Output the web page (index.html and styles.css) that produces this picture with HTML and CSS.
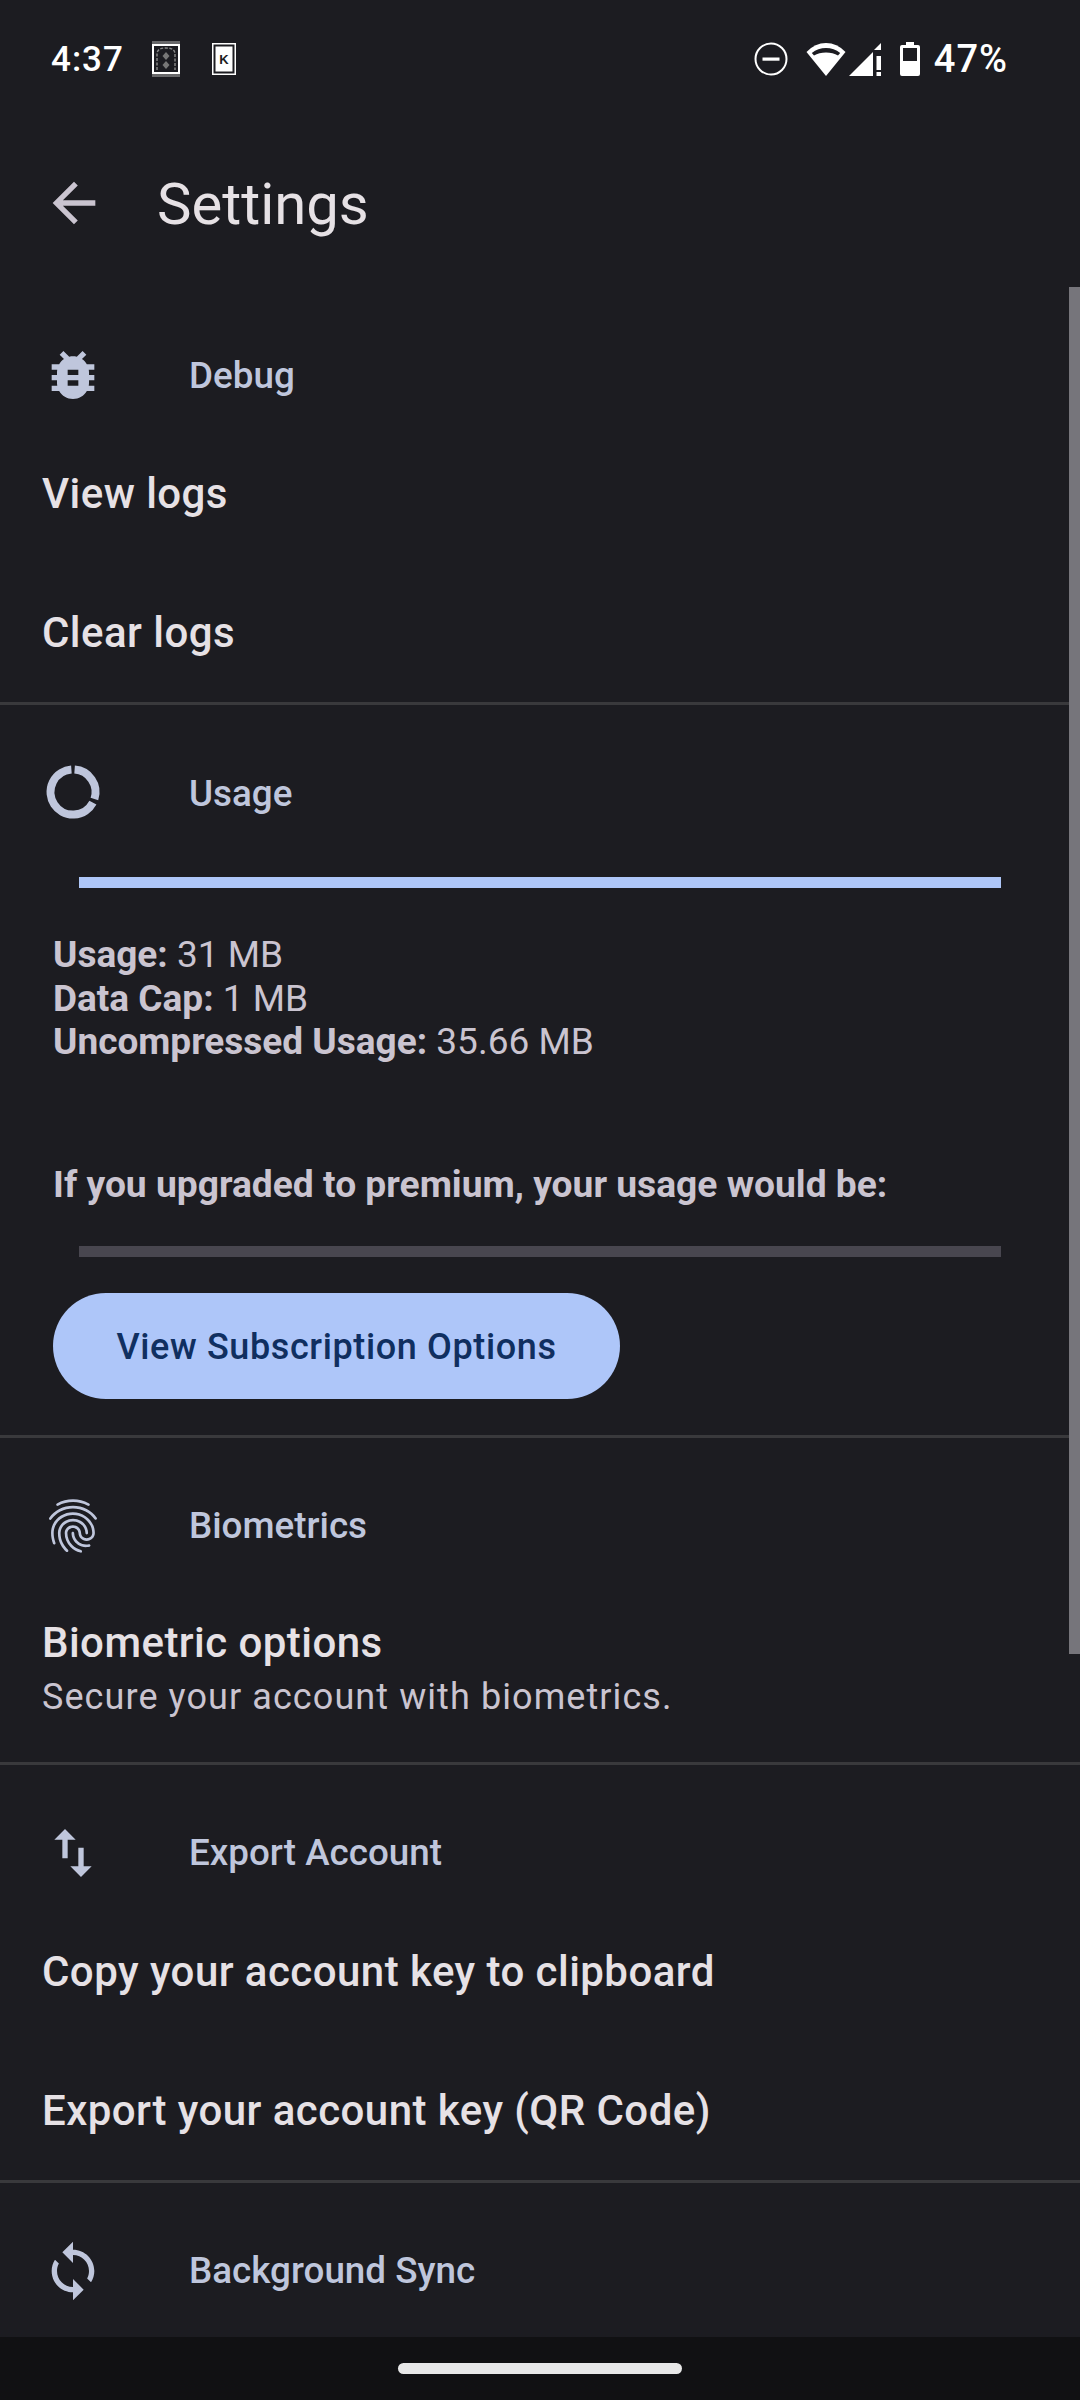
FILE: index.html
```html
<!DOCTYPE html>
<html lang="en">
<head>
    <meta charset="UTF-8">
    <title>Settings</title>
    <link rel="stylesheet" href="styles.css">
</head>
<body>
    <div class="status-bar">
        <span class="clock">4:37</span>
        <svg class="notif notif-rug" viewBox="0 0 28 36">
            <path d="M1 0v5M3 0v5M5 0v5M7 0v5M9 0v5M11 0v5M13 0v5M15 0v5M17 0v5M19 0v5M21 0v5M23 0v5M25 0v5M27 0v5M1 31v5M3 31v5M5 31v5M7 31v5M9 31v5M11 31v5M13 31v5M15 31v5M17 31v5M19 31v5M21 31v5M23 31v5M25 31v5M27 31v5" stroke="#b5b5b5" stroke-width="1" fill="none"/>
            <rect x="1" y="4" width="26" height="28" fill="none" stroke="#fff" stroke-width="2"/>
            <path d="M5 29V13q0-6 9-6t9 6v16" fill="none" stroke="#8a8a8a" stroke-width="1.4" stroke-dasharray="3 1.5"/>
            <path d="M14 11l3.500 4-3.500 4-3.500-4zM14 20l3.500 4-3.500 4-3.500-4z" fill="#777"/>
        </svg>
        <svg class="notif notif-card" viewBox="0 0 24 32">
            <rect x="0.750" y="0.750" width="22.500" height="30.500" fill="none" stroke="#fff" stroke-width="1.500"/>
            <rect x="3.500" y="3.500" width="17" height="25" fill="#fff"/>
            <text x="12" y="21" class="card-letter">K</text>
        </svg>
        <div class="status-right">
            <svg class="sys sys-dnd" viewBox="0 0 34 34">
                <circle cx="17" cy="17" r="15.500" fill="none" stroke="#fff" stroke-width="2"/>
                <rect x="8.500" y="15.500" width="17" height="3.200" fill="#fff"/>
            </svg>
            <svg class="sys sys-wifi" viewBox="0 0 40 34">
                <path d="M20 34L0.500 10Q9 1 20 1T39.500 10Z" fill="#fff"/>
                <path d="M20 10.500Q13 10.500 8 13.500L5.800 11Q12 6 20 6T34.200 11L32 13.500Q27 10.500 20 10.500Z" fill="#1c1c21"/>
            </svg>
            <svg class="sys sys-signal" viewBox="0 0 33 33">
                <path d="M0 33L24 9V33Z" fill="#fff"/>
                <path d="M25 7L32 0V7Z" fill="#fff"/>
                <rect x="27.500" y="13" width="4.500" height="14" fill="#fff"/>
                <rect x="27.500" y="29" width="4.500" height="4" fill="#fff"/>
            </svg>
            <svg class="sys sys-battery" viewBox="0 0 20 34">
                <path d="M6 0h8v3h4q2 0 2 2v27q0 2-2 2H2q-2 0-2-2V5q0-2 2-2h4z" fill="#fff"/>
                <rect x="3" y="6" width="14" height="13" fill="#1c1c21"/>
            </svg>
            <span class="battery-pct">47%</span>
        </div>
    </div>

    <div class="toolbar">
        <svg class="icon back-icon" viewBox="0 0 24 24"><path d="M20 11H7.830l5.590-5.590L12 4l-8 8 8 8 1.410-1.410L7.830 13H20v-2z"/></svg>
        <span class="toolbar-title">Settings</span>
    </div>

    <div class="settings">
        <div class="scrollbar"></div>

        <section class="group">
            <div class="category">
                <svg class="icon" viewBox="0 0 24 24"><path d="M20 8h-2.810c-.45-.78-1.070-1.450-1.820-1.960L17 4.410 15.590 3l-2.170 2.170C12.960 5.060 12.490 5 12 5c-.49 0-.96.06-1.410.17L8.410 3 7 4.410l1.620 1.630C7.880 6.550 7.260 7.220 6.810 8H4v2h2.090c-.05.33-.09.66-.09 1v1H4v2h2v1c0 .34.04.67.09 1H4v2h2.810c1.040 1.790 2.970 3 5.190 3s4.150-1.210 5.190-3H20v-2h-2.090c.05-.33.09-.66.09-1v-1h2v-2h-2v-1c0-.34-.04-.67-.09-1H20V8zm-6 8h-4v-2h4v2zm0-4h-4v-2h4v2z"/></svg>
                <span class="category-title">Debug</span>
            </div>
            <div class="item">View logs</div>
            <div class="item">Clear logs</div>
        </section>

        <section class="group usage-group">
            <div class="category">
                <svg class="icon donut" viewBox="0 1 64 64">
                    <path d="M33.600 9.600A22.500 22.500 0 0 1 53.400 39"/>
                    <path d="M51.900 42.600A22.500 22.500 0 1 1 30.400 9.600"/>
                </svg>
                <span class="category-title">Usage</span>
            </div>
            <div class="progress progress-full"></div>
            <p class="usage-lines">
                <b>Usage:</b> 31 MB<br>
                <b>Data Cap:</b> 1 MB<br>
                <b>Uncompressed Usage:</b> 35.66 MB
            </p>
            <p class="premium-note">If you upgraded to premium, your usage would be:</p>
            <div class="progress progress-empty"></div>
            <button class="subscribe-btn">View Subscription Options</button>
        </section>

        <section class="group">
            <div class="category">
                <svg class="icon" viewBox="0 0 24 24"><path d="M17.810 4.470c-.08 0-.16-.02-.23-.06C15.660 3.420 14 3 12.010 3c-1.980 0-3.860.47-5.570 1.410-.24.13-.54.04-.68-.2-.13-.24-.04-.55.2-.68C7.820 2.520 9.860 2 12.010 2c2.130 0 3.990.47 6.030 1.520.25.13.34.43.21.67-.09.18-.26.28-.44.28zM3.500 9.720c-.1 0-.2-.03-.29-.09-.23-.16-.28-.47-.12-.7.99-1.400 2.250-2.500 3.750-3.270C9.980 4.040 14 4.030 17.150 5.650c1.500.77 2.760 1.860 3.750 3.250.16.22.11.54-.12.7-.23.16-.54.11-.7-.12-.9-1.260-2.040-2.250-3.390-2.940-2.870-1.470-6.540-1.470-9.400.01-1.360.7-2.500 1.700-3.400 2.960-.08.14-.23.21-.39.21zm6.250 12.070c-.13 0-.26-.05-.35-.15-.87-.87-1.340-1.430-2.010-2.640-.69-1.230-1.050-2.730-1.050-4.340 0-2.970 2.540-5.390 5.660-5.390s5.660 2.420 5.660 5.390c0 .28-.22.5-.5.5s-.5-.22-.5-.5c0-2.420-2.090-4.390-4.660-4.390-2.570 0-4.660 1.970-4.660 4.390 0 1.440.32 2.770.93 3.850.64 1.150 1.080 1.640 1.850 2.420.19.2.19.51 0 .71-.11.1-.24.15-.37.15zm7.170-1.850c-1.190 0-2.240-.3-3.100-.89-1.490-1.010-2.380-2.650-2.380-4.390 0-.28.22-.5.5-.5s.5.22.5.5c0 1.410.72 2.740 1.940 3.560.71.48 1.540.71 2.540.71.24 0 .64-.03 1.040-.1.27-.05.53.13.58.41.05.27-.13.53-.41.58-.57.11-1.070.12-1.210.12zM14.910 22c-.04 0-.09-.01-.13-.02-1.590-.44-2.630-1.030-3.720-2.100-1.400-1.390-2.170-3.240-2.170-5.220 0-1.620 1.380-2.940 3.080-2.940 1.700 0 3.080 1.320 3.080 2.940 0 1.070.93 1.940 2.080 1.940s2.080-.87 2.080-1.940c0-3.770-3.250-6.830-7.250-6.830-2.840 0-5.440 1.580-6.610 4.030-.39.81-.59 1.760-.59 2.800 0 .78.07 2.010.67 3.610.1.26-.03.55-.29.64-.26.1-.55-.04-.64-.29-.49-1.310-.73-2.610-.73-3.960 0-1.200.23-2.290.68-3.240 1.330-2.790 4.280-4.600 7.510-4.600 4.550 0 8.250 3.510 8.250 7.830 0 1.620-1.380 2.940-3.080 2.940s-3.080-1.320-3.080-2.940c0-1.070-.93-1.940-2.080-1.940s-2.080.87-2.080 1.940c0 1.710.66 3.310 1.870 4.510.95.94 1.860 1.460 3.270 1.850.27.07.42.35.35.61-.05.23-.26.38-.47.38z"/></svg>
                <span class="category-title">Biometrics</span>
            </div>
            <div class="item item-two-line">
                <div class="item-title">Biometric options</div>
                <div class="item-summary">Secure your account with biometrics.</div>
            </div>
        </section>

        <section class="group">
            <div class="category">
                <svg class="icon" viewBox="0 0 24 24"><path d="M9 3L5 6.990h3V14h2V6.990h3L9 3zm7 14.010V10h-2v7.010h-3L15 21l4-3.990h-3z"/></svg>
                <span class="category-title">Export Account</span>
            </div>
            <div class="item">Copy your account key to clipboard</div>
            <div class="item">Export your account key (QR Code)</div>
        </section>

        <section class="group">
            <div class="category">
                <svg class="icon" viewBox="0 0 24 24"><path d="M12 4V1L8 5l4 4V6c3.310 0 6 2.690 6 6 0 1.010-.25 1.970-.7 2.800l1.460 1.460C19.540 15.030 20 13.570 20 12c0-4.420-3.580-8-8-8zm0 14c-3.310 0-6-2.690-6-6 0-1.010.25-1.970.7-2.800L5.240 7.740C4.460 8.970 4 10.430 4 12c0 4.420 3.580 8 8 8v3l4-4-4-4v3z"/></svg>
                <span class="category-title">Background Sync</span>
            </div>
        </section>
    </div>

    <div class="nav-bar"><div class="nav-handle"></div></div>
</body>
</html>
```

FILE: styles.css
```css
* {
    box-sizing: border-box;
}
body {
    margin: 0;
    width: 1080px;
    height: 2400px;
    overflow: hidden;
    display: flex;
    flex-direction: column;
    background: #1c1c21;
    font-family: Roboto, "Noto Sans", sans-serif;
}

.status-bar {
    height: 118px;
    flex: none;
    display: flex;
    align-items: center;
    padding: 0 72px 0 51px;
    color: #fff;
}
.clock, .battery-pct {
    font-size: 35px;
    font-weight: 500;
    letter-spacing: 1px;
}
.battery-pct {
    font-size: 38px;
}
.notif-rug {
    width: 28px;
    height: 36px;
    margin-left: 28px;
}
.notif-card {
    width: 24px;
    height: 32px;
    margin-left: 32px;
}
.card-letter {
    font-family: "Liberation Sans", sans-serif;
    font-size: 13px;
    font-weight: 700;
    fill: #1c1c21;
    text-anchor: middle;
}
.status-right {
    margin-left: auto;
    display: flex;
    align-items: center;
}
.sys-dnd {
    width: 34px;
    height: 34px;
    margin-right: 18px;
}
.sys-wifi {
    width: 40px;
    height: 34px;
    margin-right: 3px;
}
.sys-signal {
    width: 33px;
    height: 33px;
    margin-right: 18px;
}
.sys-battery {
    width: 20px;
    height: 34px;
    margin-right: 14px;
}

.toolbar {
    height: 169px;
    flex: none;
    display: flex;
    align-items: center;
    padding: 2px 0 0 42px;
}
.toolbar-title {
    margin-left: 51px;
    font-size: 58px;
    color: #e6e1e5;
}
.icon {
    width: 64px;
    height: 64px;
    flex: none;
    fill: #bfc6dc;
}
.back-icon {
    fill: #cac4d0;
    margin-top: -2px;
}
.donut {
    fill: none;
    stroke: #bfc6dc;
    stroke-width: 8;
}

.settings {
    flex: 1;
    min-height: 0;
    overflow: hidden;
    position: relative;
}
.scrollbar {
    position: absolute;
    right: 0;
    top: 0;
    width: 11px;
    height: 1367px;
    background: #76757b;
}
.group {
    border-bottom: 3px solid #39393c;
}
.group:last-child {
    border-bottom: 0;
}
.category {
    height: 137px;
    padding: 56px 0 17px 41px;
    display: flex;
    align-items: center;
}
.category-title {
    margin-left: 84px;
    font-size: 36.800px;
    font-weight: 500;
    color: #bfc6dc;
}
.item {
    height: 139px;
    padding-left: 42px;
    display: flex;
    align-items: center;
    font-size: 42px;
    font-weight: 500;
    letter-spacing: 0.450px;
    color: #e6e1e5;
}
.item-two-line {
    height: 187px;
    padding-top: 43px;
    flex-direction: column;
    align-items: flex-start;
    justify-content: flex-start;
}
.item-title {
    line-height: 50px;
}
.item-summary {
    font-size: 36px;
    line-height: 58px;
    font-weight: 400;
    letter-spacing: 1.080px;
    color: #cac4d0;
}

.usage-group {
    padding-bottom: 36px;
}
.progress {
    height: 11px;
    margin: 0 79px;
}
.progress-full {
    margin-top: 35px;
    background: #aec6f8;
}
.progress-empty {
    background: #48464f;
}
.usage-lines {
    margin: 45px 0 0 53px;
    font-size: 37px;
    line-height: 43.500px;
    color: #cac4d0;
}
.premium-note {
    margin: 98px 0 40px 53px;
    font-size: 37.200px;
    line-height: 44px;
    font-weight: 700;
    color: #cac4d0;
}
.subscribe-btn {
    display: block;
    width: 567px;
    height: 106px;
    margin: 36px 0 0 53px;
    padding: 2px 0 0;
    border: 0;
    border-radius: 53px;
    background: #aec6f9;
    color: #102f60;
    font-family: inherit;
    font-size: 36px;
    font-weight: 500;
    letter-spacing: 0.620px;
}

.nav-bar {
    height: 63px;
    flex: none;
    background: #111113;
    display: flex;
    justify-content: center;
    padding-top: 26px;
}
.nav-handle {
    width: 284px;
    height: 11px;
    border-radius: 6px;
    background: #e8e8e8;
}
```
